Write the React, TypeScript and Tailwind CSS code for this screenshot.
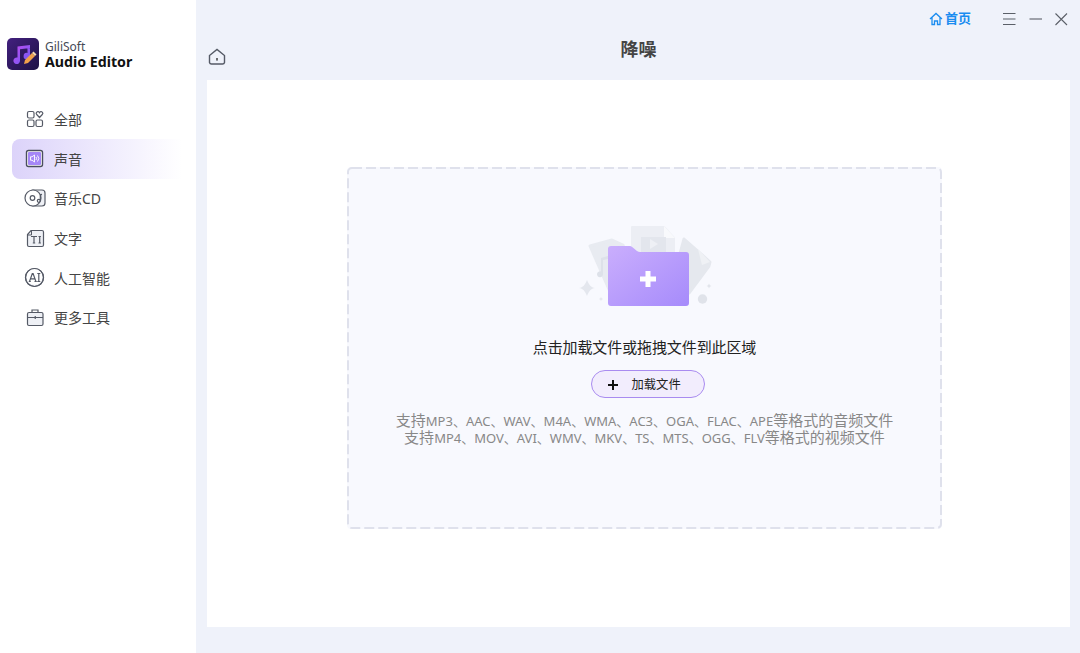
import React from "react";

const Ico = ({ children }: { children: React.ReactNode }) => (
  <svg width="22" height="22" viewBox="0 0 22 22" fill="none" stroke="#555a66" strokeWidth="1.2" className="shrink-0">
    {children}
  </svg>
);

const items: { label: string; active?: boolean; icon: React.ReactNode }[] = [
  {
    label: "全部",
    icon: (
      <Ico>
        <rect x="3.500" y="3.500" width="6.500" height="6.500" rx="1.500" />
        <rect x="3.500" y="12" width="6.500" height="6.500" rx="1.500" />
        <rect x="12" y="12" width="6.500" height="6.500" rx="1.500" />
        <path d="M15.500 9.500l-2.800-3a1.700 1.700 0 0 1 0-2.400 1.700 1.700 0 0 1 2.800.4 1.700 1.700 0 0 1 2.800-.4 1.700 1.700 0 0 1 0 2.400z" />
      </Ico>
    ),
  },
  {
    label: "声音",
    active: true,
    icon: (
      <Ico>
        <rect x="2.500" y="2.500" width="16" height="16" rx="2" stroke="#4b4f5e" fill="#fff" strokeWidth="1.400" />
        <rect x="4" y="4" width="13" height="13" rx="1" fill="#a587f7" stroke="none" />
        <path d="M6.500 8.800h1.500L10.500 7v7L8 12.200H6.500zM12 9a2.500 2.500 0 0 1 0 3M13.500 7.500a4.500 4.500 0 0 1 0 6" stroke="#fff" strokeWidth="0.900" />
      </Ico>
    ),
  },
  {
    label: "音乐CD",
    icon: (
      <Ico>
        <rect x="6" y="2" width="15" height="16" rx="3" fill="#eef0f5" />
        <circle cx="9" cy="10" r="8" fill="#fff" />
        <circle cx="8.500" cy="10" r="2.300" />
        <circle cx="14.800" cy="12.800" r="1.500" />
        <path d="M16.300 12.800V6.800l1.700-.5" />
      </Ico>
    ),
  },
  {
    label: "文字",
    icon: (
      <Ico>
        <path d="M7 2.500h11a1.500 1.500 0 0 1 1.500 1.500v13a1.500 1.500 0 0 1-1.500 1.500H5A1.500 1.500 0 0 1 3.500 17V6.500z" fill="#eef0f5" />
        <path d="M3.500 7H7.500V2.500" strokeWidth="1" />
        <path d="M7 8.500h6M10 8.500v6.500M8.800 15h2.400M14.500 8.500h2.400M15.700 8.500v6.500M14.500 15h2.400" strokeWidth="1.200" />
      </Ico>
    ),
  },
  {
    label: "人工智能",
    icon: (
      <Ico>
        <circle cx="10.500" cy="10.500" r="9" fill="#eef0f5" />
        <circle cx="10.500" cy="9.800" r="8" fill="#fff" stroke="none" />
        <circle cx="10.500" cy="10.500" r="9" />
        <path d="M5.500 14.500l2.800-8h.8l2.800 8M6.800 11.800h4.200M4.800 14.500h2M10.500 14.500h2.300M13.300 6.500h3M13.300 14.500h3M14.800 6.500v8" strokeWidth="1.200" />
      </Ico>
    ),
  },
  {
    label: "更多工具",
    icon: (
      <Ico>
        <path d="M8 5.500V3h6v2.500" />
        <rect x="3.500" y="5.500" width="15.500" height="13" rx="1.500" fill="#eef0f5" />
        <path d="M3.500 10.500h15.500M11.250 9v3" />
      </Ico>
    ),
  },
];

const Logo = () => (
  <svg width="32" height="32" viewBox="0 0 32 32" className="shrink-0">
    <defs>
      <linearGradient id="lg" x1="0" y1="0" x2="1" y2="1">
        <stop offset="0" stopColor="#43207f" />
        <stop offset="1" stopColor="#1d1245" />
      </linearGradient>
      <linearGradient id="nt" x1="0" y1="0" x2="1" y2="1">
        <stop offset="0" stopColor="#c34bf0" />
        <stop offset="1" stopColor="#6a5cf5" />
      </linearGradient>
    </defs>
    <rect width="32" height="32" rx="5" fill="url(#lg)" />
    <path d="M10.500 8.500l12.500-1.500v3l-10 1.200v11.500a3.300 3.300 0 1 1-2.500-3.200zM23 7v11a3.200 3.200 0 1 1-2.500-3V9z" fill="url(#nt)" />
    <path d="M17 26l1-4 7-7 3 3-7 7z" fill="#f0a04b" />
    <path d="M25 15l1.500-1.500 3 3L28 18z" fill="#f7d9a8" />
  </svg>
);

const Folder = () => (
  <svg width="170" height="110" viewBox="0 0 170 110" fill="none">
    <defs>
      <linearGradient id="fd" x1="0" y1="0" x2="1" y2="1">
        <stop offset="0" stopColor="#caaefd" />
        <stop offset="1" stopColor="#a68bfb" />
      </linearGradient>
    </defs>
    <path d="M30 36l22-6 11 5 14 46-26 3z" fill="#e8ebf1" stroke="#e8ebf1" strokeWidth="3" strokeLinejoin="round" />
    <path d="M43 50v14a3 3 0 1 1-2-2.500V48l7-2v3z" fill="#dde1e9" />
    <path d="M72 17h32l10 11v28H72z" fill="#eceef4" stroke="#eceef4" strokeWidth="2" strokeLinejoin="round" />
    <path d="M104 16v12h11z" fill="#f8f9fc" />
    <path d="M81 27h25v15H81z" fill="#e3e6ed" />
    <path d="M90 29l8 5-8 5z" fill="#eef0f5" />
    <path d="M124 29l26 23-1 4-20 27-18-6z" fill="#e5e8ee" stroke="#e5e8ee" strokeWidth="3" strokeLinejoin="round" />
    <path d="M138 39l12 13-8 3z" fill="#eff1f5" />
    <path d="M19 78c4-.5 6-3 8-8 2 5 4 7.500 8 8-4 .5-6 3-8 8-2-5-4-7.500-8-8z" fill="#e4e7ee" />
    <circle cx="142.500" cy="89" r="4.700" fill="#e0e3ea" />
    <path d="M149 73.500l.8 1.700 1.700.8-1.700.8-.8 1.700-.8-1.700-1.700-.8 1.700-.8z" fill="#e1e4eb" />
    <path d="M41 87l.7 1.300 1.300.7-1.300.7-.7 1.300-.7-1.300-1.300-.7 1.300-.7z" fill="#e4e7ee" />
    <path d="M48 39a3 3 0 0 1 3-3h18c1.500 0 2.500.4 3.500 1.200L77 41c1 .7 2 1 3 1h46a3 3 0 0 1 3 3v48a3 3 0 0 1-3 3H51a3 3 0 0 1-3-3z" fill="url(#fd)" />
    <path d="M88 61v16M80 69h16" stroke="#fff" strokeWidth="5" />
  </svg>
);

export default function App() {
  return (
    <div className="flex w-[1080px] h-[653px] overflow-hidden bg-[#eff2fa] text-[#333]">
      <aside className="w-[196px] shrink-0 bg-white font-['Noto_Sans','Noto_Sans_CJK_SC',sans-serif]">
        <div className="flex items-center gap-[6px] pl-[7px] pt-[38px]">
          <Logo />
          <div className="flex flex-col">
            <span className="text-[12px] leading-[15px] text-[#444a55]">GiliSoft</span>
            <span className="text-[14.200px] leading-[16px] font-bold text-[#111]">Audio Editor</span>
          </div>
        </div>
        <nav className="flex flex-col pl-[12px] pt-[29.600px]">
          {items.map((it) => (
            <div
              key={it.label}
              className={
                "flex items-center gap-[8px] w-[170px] h-[39.700px] pl-[12px] rounded-l-[8px] text-[14px] text-[#444] " +
                (it.active ? "bg-gradient-to-r from-[#dcd3fa] to-white" : "")
              }
            >
              {it.icon}
              <span>{it.label}</span>
            </div>
          ))}
        </nav>
      </aside>

      <main className="flex-1 flex flex-col pl-[11px] pr-[10px] pb-[26px] font-['Noto_Sans','Noto_Sans_CJK_SC',sans-serif]">
        <header className="relative h-[80px] shrink-0">
          <div className="absolute right-[1px] top-[9px] flex items-center">
            <div className="flex items-center gap-[2px] text-[13px] font-bold text-[#1a8cf0] mr-[30px]">
              <svg width="14" height="14" viewBox="0 0 14 14" fill="none" stroke="#1a8cf0" strokeWidth="1.300">
                <path d="M1 7l6-5.500L13 7M3 5.500V12.500h2.500V9h3v3.500H11V5.500" />
              </svg>
              <span>首页</span>
            </div>
            <svg width="16" height="16" viewBox="0 0 16 16" stroke="#5b6068" strokeWidth="1.100" className="mr-[11px]">
              <path d="M2 2.500h12.500M2 8h12.500M2 13.500h12.500" />
            </svg>
            <svg width="16" height="16" viewBox="0 0 16 16" stroke="#5b6068" strokeWidth="1.100" className="mr-[9px]">
              <path d="M1.500 8h12.500" />
            </svg>
            <svg width="16" height="16" viewBox="0 0 16 16" stroke="#5b6068" strokeWidth="1.100">
              <path d="M2.500 2.500l11.500 11.500M14 2.500L2.500 14" />
            </svg>
          </div>
          <svg width="20" height="20" viewBox="0 0 20 20" fill="none" stroke="#555a66" strokeWidth="1.400" className="absolute left-0 top-[47px]">
            <path d="M2.500 8.500L10 2.500l7.500 6v7a2 2 0 0 1-2 1.500h-11a2 2 0 0 1-2-1.500z" />
            <rect x="9.300" y="11" width="1.400" height="2.600" fill="#333" stroke="none" />
          </svg>
          <h1 className="absolute inset-x-0 top-[36px] text-center text-[18px] leading-[26px] font-bold text-[#444]">
            降噪
          </h1>
        </header>

        <section className="flex-1 bg-white pl-[140px] pr-[128px] pt-[87px] pb-[98px]">
          <div className="relative h-full flex flex-col items-center p-[2px] rounded-[4px] bg-[#f8f9fe]">
            <svg width="595" height="362" className="absolute left-0 top-0" fill="none">
              <rect x="1" y="1" width="593" height="360" rx="4" stroke="#dfe1ec" strokeWidth="2" strokeDasharray="10 4" />
            </svg>
            <div className="relative mt-[41px] h-[110px]">
              <Folder />
            </div>
            <p className="relative mt-[17px] text-[15px] leading-[20px] tracking-[-0.100px] text-[#222]">点击加载文件或拖拽文件到此区域</p>
            <button className="relative mt-[13px] ml-[6px] w-[114px] h-[28px] flex items-center justify-start pl-[15px] gap-[13px] rounded-full border border-[#a98bf0] bg-[#f2edfd] text-[12.300px] text-[#222]">
              <svg width="12" height="12" viewBox="0 0 12 12" stroke="#111" strokeWidth="2" className="mt-[1px]">
                <path d="M6 1v10M1 6h10" />
              </svg>
              <span className="mt-[3px]">加载文件</span>
            </button>
            <div className="relative mt-[14px] text-center text-[15px] leading-[16px] text-[#888]">
              <p>
                支持<span className="text-[13px]">MP3、AAC、WAV、M4A、WMA、AC3、OGA、FLAC、APE</span>等格式的音频文件
              </p>
              <p>
                支持<span className="text-[13px]">MP4、MOV、AVI、WMV、MKV、TS、MTS、OGG、FLV</span>等格式的视频文件
              </p>
            </div>
          </div>
        </section>
      </main>
    </div>
  );
}
